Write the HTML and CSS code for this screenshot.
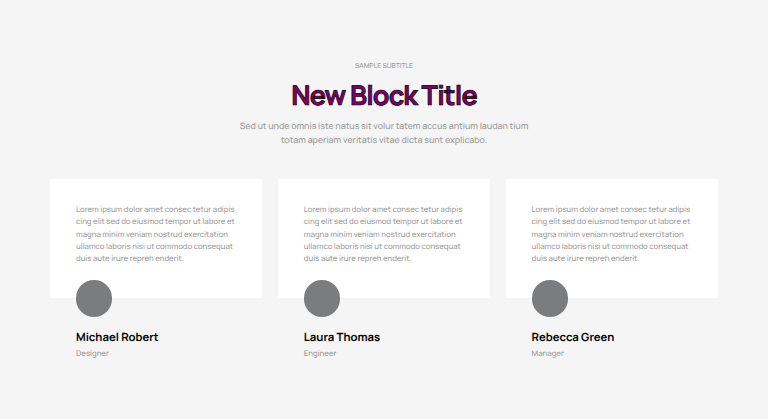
FILE: index.html
```html
<!DOCTYPE html>
<html lang="en">
  <head>
    <meta charset="UTF-8" />
    <meta name="viewport" content="width=device-width, initial-scale=1.0" />
    <title>New Block Title</title>
    <link rel="stylesheet" href="styles.css">
  </head>
  <body>
    <section class="testimonials">
      <header class="heading">
        <p class="subtitle">SAMPLE SUBTITLE</p>
        <h2 class="title">New Block Title</h2>
        <p class="intro">
          Sed ut unde omnis iste natus sit volur tatem accus antium laudan tium<br />
          totam aperiam veritatis vitae dicta sunt explicabo.
        </p>
      </header>

      <div class="cards">
        <article class="card">
          <p class="quote">
            Lorem ipsum dolor amet consec tetur adipis<br />
            cing elit sed do eiusmod tempor ut labore et<br />
            magna minim veniam nostrud exercitation<br />
            ullamco laboris nisi ut commodo consequat<br />
            duis aute irure repreh enderit.
          </p>
          <div class="avatar"></div>
          <h3 class="name">Michael Robert</h3>
          <p class="role">Designer</p>
        </article>

        <article class="card">
          <p class="quote">
            Lorem ipsum dolor amet consec tetur adipis<br />
            cing elit sed do eiusmod tempor ut labore et<br />
            magna minim veniam nostrud exercitation<br />
            ullamco laboris nisi ut commodo consequat<br />
            duis aute irure repreh enderit.
          </p>
          <div class="avatar"></div>
          <h3 class="name">Laura Thomas</h3>
          <p class="role">Engineer</p>
        </article>

        <article class="card">
          <p class="quote">
            Lorem ipsum dolor amet consec tetur adipis<br />
            cing elit sed do eiusmod tempor ut labore et<br />
            magna minim veniam nostrud exercitation<br />
            ullamco laboris nisi ut commodo consequat<br />
            duis aute irure repreh enderit.
          </p>
          <div class="avatar"></div>
          <h3 class="name">Rebecca Green</h3>
          <p class="role">Manager</p>
        </article>
      </div>
    </section>
  </body>
</html>
```

FILE: styles.css
```css
* {
  box-sizing: border-box;
}

body {
  margin: 0;
  background: #f5f5f5;
  color: #999;
  font-family: Manrope, Inter, sans-serif;
  text-rendering: geometricPrecision;
}

h2,
h3,
p {
  margin: 0;
}

.testimonials {
  height: 419px;
  padding: 61px 50px 0;
}

.heading {
  text-align: center;
}

.subtitle {
  font-size: 6.8px;
  font-weight: 500;
  line-height: 12px;
}

.title {
  margin-top: 6px;
  color: #80006a;
  font-size: 27px;
  font-weight: 700;
  line-height: 34px;
  letter-spacing: -0.85px;
  -webkit-text-stroke: 0.7px #000;
}

.intro {
  margin-top: 6px;
  font-size: 8.83px;
  font-weight: 500;
  line-height: 14px;
}

.cards {
  display: grid;
  grid-template-columns: repeat(3, 212.3px);
  gap: 15.5px;
  margin-top: 32.3px;
}

.quote {
  height: 119px;
  padding: 24.4px 0 0 26px;
  background: #fff;
  font-size: 7.77px;
  font-weight: 500;
  line-height: 12.4px;
  white-space: nowrap;
}

.avatar {
  position: relative;
  width: 36.4px;
  height: 36.4px;
  margin: -18.2px 0 0 26px;
  border-radius: 50%;
  background: #7b7c7d;
}

.name {
  margin: 12.2px 0 0 26px;
  color: #000;
  font-size: 11.3px;
  font-weight: 700;
  line-height: 18px;
}

.role {
  margin: 1px 0 0 26px;
  font-size: 7.8px;
  font-weight: 500;
  line-height: 12px;
}
```
